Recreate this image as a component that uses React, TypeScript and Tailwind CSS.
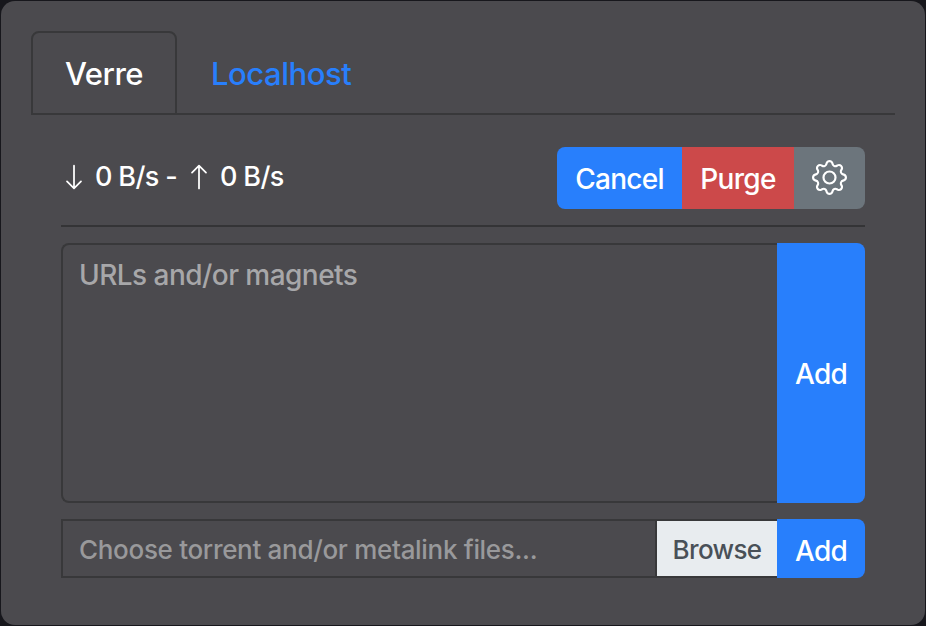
import { BsArrowDown, BsArrowUp, BsGear } from "react-icons/bs";

export default function App() {
  return (
    <div className="h-[626px] w-[926px] overflow-hidden bg-[#17171c] p-px font-['Inter','Liberation_Sans',sans-serif] text-[28px] font-[450] text-white">
      <div className="h-full w-full rounded-[14px] bg-[#4b4a4e] px-[30px] pt-[30px]">
        <nav className="flex h-[84px] border-b-2 border-[#38383a] leading-[48px]">
          <button className="h-[84px] w-[146px] rounded-t-lg border-2 border-[#38383a] pt-0.5 text-[31px]">
            <span className="inline-block whitespace-nowrap tracking-[-0.5px]">Verre</span>
          </button>
          <button className="h-[84px] pl-[34px] pt-0.5 text-[31px] text-[#287ffc]">
            <span className="inline-block whitespace-nowrap tracking-[-0.45px]">Localhost</span>
          </button>
        </nav>
        <main className="px-[30px] pt-8">
          <header className="flex h-20 justify-between border-b-2 border-[#343436]">
            <div className="flex h-[60px] items-center whitespace-nowrap text-[27px] font-medium tracking-[-0.65px]">
              <BsArrowDown size={28} className="-ml-px shrink-0" />
              <span className="ml-[7px]">0 B/s -</span>
              <BsArrowUp size={28} className="ml-2 shrink-0" />
              <span className="ml-[7px]">0 B/s</span>
            </div>
            <div className="flex h-[62px] overflow-hidden rounded-lg text-[28px] tracking-[-0.7px]">
              <button className="w-[125px] bg-[#287ffc] pt-px">Cancel</button>
              <button className="w-[112px] bg-[#cc494a] pt-px">Purge</button>
              <button className="flex w-[71px] items-center justify-center bg-[#6c757c] pb-0.5">
                <BsGear size={35} />
              </button>
            </div>
          </header>
          <section className="mt-4 flex h-[260px]">
            <textarea
              aria-label="URLs and/or magnets"
              placeholder="URLs and/or magnets"
              className="h-full w-[716px] resize-none rounded-l-lg border-2 border-r-0 border-[#38383a] bg-transparent px-4 pt-[9px] text-[28px] font-[450] leading-[42px] tracking-[-0.54px] outline-none placeholder:text-[#a7a7a9]"
            />
            <button className="w-[88px] rounded-r-lg bg-[#287ffc] pt-px text-[28px] tracking-[-0.8px]">Add</button>
          </section>
          <section className="mt-4 flex h-[59px] text-[26px]">
            <div className="flex w-[716px] border-2 border-r-0 border-[#38383a]">
              <div className="flex w-[594px] items-center whitespace-nowrap border-r-2 border-[#38383a] pl-4 pt-px tracking-[-0.31px] text-[#99999b]">
                <span>Choose torrent and/or metalink files...</span>
              </div>
              <button className="w-[120px] bg-[#e8ecef] pt-[2px] tracking-[-0.65px] text-[#495057]">Browse</button>
            </div>
            <button className="w-[88px] rounded-r-lg bg-[#287ffc] pt-1 text-[28px] tracking-[-0.8px]">Add</button>
          </section>
        </main>
      </div>
    </div>
  );
}
